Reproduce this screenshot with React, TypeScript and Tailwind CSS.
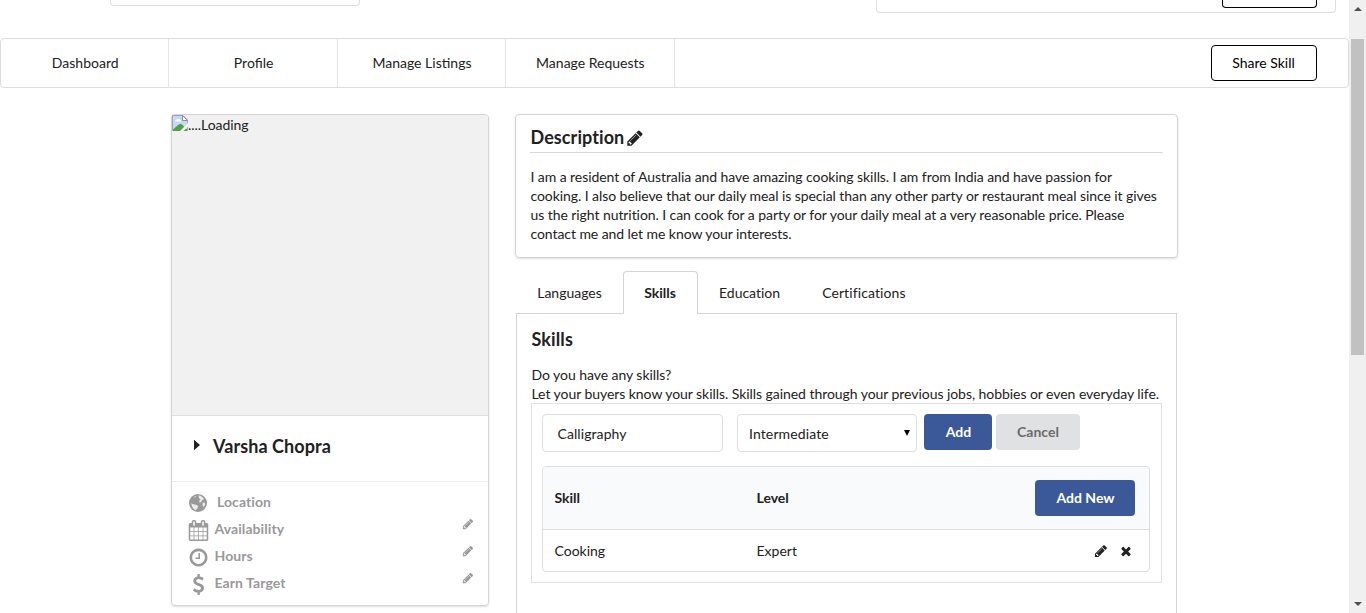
import React from "react";

const PENCIL =
  "M491 1536l91-91-235-235-91 91v107h128v128h107zm523-928q0-22-22-22-10 0-17 7l-542 542q-7 7-7 17 0 22 22 22 10 0 17-7l542-542q7-7 7-17zm-54-192l416 416-832 832h-416v-416zm683 96q0 53-37 90l-166 166-416-416 166-165q36-38 90-38 53 0 91 38l235 234q37 39 37 91z";
const TIMES =
  "M1490 1322q0 40-28 68l-136 136q-28 28-68 28t-68-28l-294-294-294 294q-28 28-68 28t-68-28l-136-136q-28-28-28-68t28-68l294-294-294-294q-28-28-28-68t28-68l136-136q28-28 68-28t68 28l294 294 294-294q28-28 68-28t68 28l136 136q28 28 28 68t-28 68l-294 294 294 294q28 28 28 68z";
const CLOCK =
  "M1024 544v448q0 14-9 23t-23 9h-320q-14 0-23-9t-9-23v-64q0-14 9-23t23-9h224v-352q0-14 9-23t23-9h64q14 0 23 9t9 23zm416 352q0-148-73-273t-198-198-273-73-273 73-198 198-73 273 73 273 198 198 273 73 273-73 198-198 73-273zm224 0q0 209-103 385.5t-279.5 279.5-385.5 103-385.5-103-279.5-279.5-103-385.5 103-385.5 279.5-279.5 385.5-103 385.5 103 279.5 279.5 103 385.5z";
const CALENDAR =
  "M192 1664h288v-288h-288v288zm352 0h320v-288h-320v288zm-352-352h288v-320h-288v320zm352 0h320v-320h-320v320zm-352-384h288v-288h-288v288zm736 736h320v-288h-320v288zm-384-736h320v-288h-320v288zm768 736h288v-288h-288v288zm-384-352h320v-320h-320v320zm-352-864v-288q0-13-9.5-22.5t-22.5-9.5h-64q-13 0-22.5 9.5t-9.5 22.5v288q0 13 9.5 22.5t22.5 9.5h64q13 0 22.5-9.5t9.5-22.5zm736 864h288v-320h-288v320zm-384-384h320v-288h-320v288zm384 0h288v-288h-288v288zm32-480v-288q0-13-9.5-22.5t-22.5-9.5h-64q-13 0-22.5 9.5t-9.5 22.5v288q0 13 9.5 22.5t22.5 9.5h64q13 0 22.5-9.5t9.5-22.5zm384-64v1280q0 52-38 90t-90 38h-1408q-52 0-90-38t-38-90v-1280q0-52 38-90t90-38h128v-96q0-66 47-113t113-47h64q66 0 113 47t47 113v96h384v-96q0-66 47-113t113-47h64q66 0 113 47t47 113v96h128q52 0 90 38t38 90z";
const DOLLAR =
  "M1362 1185q0 153-99.5 263.5t-258.5 136.5v175q0 14-9 23t-23 9h-135q-13 0-22.5-9.5t-9.5-22.5v-175q-66-9-127.5-31t-101.5-44.5-74-48-46.5-37.5-17.5-18q-17-21-2-41l103-135q7-10 23-12 15-2 24 9l2 2q113 99 243 125 37 8 74 8 81 0 142.5-43t61.5-122q0-28-15-53t-33.5-42-58.5-37.5-66-32-80-32.5q-39-16-61.5-25t-61.5-26.5-62.5-31-56.5-35.5-53.5-42.5-43.5-49-35.5-58-21-66.5-8.5-78q0-138 98-242t255-134v-180q0-13 9.5-22.5t22.5-9.5h135q14 0 23 9t9 23v176q57 6 110.5 23t87 33.5 63.5 37.5 39 29 15 14q17 18 5 38l-81 146q-8 15-23 16-14 3-27-7-3-3-14.5-12t-39-26.5-58.5-32-74.5-26-85.5-11.5q-95 0-155 43t-60 111q0 26 8.5 48t29.5 41.5 39.5 33 56 31 60.5 27 70 27.5q53 20 81 31.5t76 35 75.5 42.5 62 50 53 63.5 31.5 76.5 13 94z";

function Glyph({ d, className }: { d: string; className: string }) {
  return (
    <svg viewBox="0 0 1792 1792" fill="currentColor" className={className}>
      <path d={d} />
    </svg>
  );
}

function Globe() {
  return (
    <svg viewBox="0 0 20 20" className="mr-px size-5 shrink-0">
      <circle cx="10" cy="10" r="9" fill="currentColor" />
      <path
        d="M10.200 2.600 12.500 2.800 14.800 4.400 16.200 6.200 15 6.600 13.800 7.600 13 9.200 11.400 9.400 11.200 7.800 12.600 6.400 11.400 5.800 11 4.400Z M14.600 9.800 16.200 9.400 17.200 10.400 16.600 13 15.200 14 14.600 12.200Z M3.200 10.200 5.400 11.200 8 11.800 10.200 13 9.600 15 8.400 16.200 8 17.200 6 16.200 4.200 14Z M6.200 3.800 8 3 7.600 4.200 6.400 4.600Z"
        fill="#fff"
        fillOpacity=".8"
      />
    </svg>
  );
}

function BrokenImage() {
  return (
    <svg viewBox="0 0 16 16" className="size-4 shrink-0">
      <path d="M.5.5H11L15.500 5V15.500H.5Z" fill="#c3d9f7" stroke="#a2a2ae" />
      <path d="M3 6.500q0-2 2-2 1-1.500 2.500 0 2 0 1.500 2Z" fill="#fff" />
      <path d="M1 16V14.500L6 10Q9 8 11 10.500L15 14.500V16Z" fill="#51a044" />
      <path d="M10.500.5V5.500H15.500Z" fill="#fff" stroke="#8d8d9c" />
      <path d="M8 16 16 8V11.500L11.500 16Z" fill="#f8f8f8" />
    </svg>
  );
}

function Detail({ icon, label, editable, inset }: { icon: React.ReactNode; label: string; editable?: boolean; inset?: boolean }) {
  return (
    <div className="flex h-[27px] items-start tracking-[0.080px] text-[#999]">
      <span className="mt-[1px] flex w-[21px] justify-center">{icon}</span>
      <span className={inset ? "ml-[8px] font-bold" : "ml-[5.500px] font-bold"}>{label}</span>
      {editable && <Glyph d={PENCIL} className="ml-auto mt-[-1px] size-[12px]" />}
    </div>
  );
}

const primary = "flex h-9 items-center justify-center rounded-[4px] bg-[#3b5998] pb-px font-bold text-white";
const tab = "flex h-[42px] items-center px-[21px]";

export default function App() {
  return (
    <div className="flex h-[613px] w-full overflow-hidden bg-white font-['Lato',sans-serif] text-[14px] leading-[19px] text-[#212121] [font-variant-ligatures:none]">
      <div className="flex w-[1349px] shrink-0 flex-col">
        <div className="flex h-[38px] shrink-0 items-start justify-between pl-[110px] pr-[13px]">
          <div className="h-[6px] w-[250px] rounded-b-[4px] border border-t-0 border-[#dedede]" />
          <div className="flex h-[13px] w-[460px] items-start justify-end rounded-b-[4px] border border-t-0 border-[#dedede] pr-[18px]">
            <div className="h-[8px] w-[95px] rounded-b-[4px] border border-t-0 border-black" />
          </div>
        </div>
        <nav className="flex h-[50px] shrink-0 items-center rounded-[4px] border border-[#dcdddd]">
          {["Dashboard", "Profile", "Manage Listings", "Manage Requests"].map((item) => (
            <a key={item} className="flex h-full w-[168.400px] items-center justify-center border-r border-[#e4e4e5] pb-[2px] pl-px [font-variant-ligatures:normal]">
              {item}
            </a>
          ))}
          <button className="ml-auto mr-[31px] h-9 w-[106px] rounded-[4px] border border-black pb-[2px] pr-px text-black">Share Skill</button>
        </nav>
        <div className="flex items-start gap-[26px] pl-[171px] pt-[26px]">
          <aside className="flex h-[492px] w-[318px] flex-col rounded-[4px] border border-[#d4d4d5] shadow-[0_1px_2px_rgba(34,36,38,0.15)]">
            <div className="flex h-[301px] shrink-0 items-start rounded-t-[3px] border-b border-[#dfdfdf] bg-[#f1f1f1]">
              <BrokenImage />
              <span className="tracking-[-0.050px]">....Loading</span>
            </div>
            <div className="flex h-[66px] shrink-0 items-start border-b border-[#ededed] pl-[22px] pt-[19px]">
              <svg viewBox="0 0 6 12" className="mt-[4px] h-3 w-[6px] text-[#212121]">
                <path d="M0 .8 6 6 0 11.200Z" fill="currentColor" />
              </svg>
              <h2 className="ml-[13px] text-[18px] font-bold leading-[23px] tracking-[0.080px]">Varsha Chopra</h2>
            </div>
            <div className="flex flex-col pl-[16px] pr-[14px] pt-[10px]">
              <Detail icon={<Globe />} label="Location" inset />
              <Detail icon={<Glyph d={CALENDAR} className="size-[21px] shrink-0" />} label="Availability" editable />
              <Detail icon={<Glyph d={CLOCK} className="size-[21px] shrink-0" />} label="Hours" editable />
              <Detail icon={<Glyph d={DOLLAR} className="size-[21px] shrink-0" />} label="Earn Target" editable />
            </div>
          </aside>
          <main className="flex w-[663px] flex-col">
            <section className="h-[144px] rounded-[4px] border border-[#d4d4d5] px-[14px] pt-[11px] shadow-[0_1px_2px_rgba(34,36,38,0.15)]">
              <div className="flex h-[27px] items-start border-b border-[#d8d8d9]">
                <h3 className="pl-[0.500px] text-[18px] font-bold leading-[23px] tracking-[0.080px]">Description</h3>
                <Glyph d={PENCIL} className="ml-[2px] mt-[3px] size-[18px]" />
              </div>
              <p className="mt-[14px] whitespace-nowrap pl-[0.500px] tracking-[-0.070px]">
                I am a resident of Australia and have amazing cooking skills. I am from India and have passion for
                <br />
                cooking. I also believe that our daily meal is special than any other party or restaurant meal since it gives
                <br />
                us the right nutrition. I can cook for a party or for your daily meal at a very reasonable price. Please
                <br />
                contact me and let me know your interests.
              </p>
            </section>
            <div className="ml-px mt-[13px] flex h-[43px] w-[661px]">
              <div className="flex w-[107px] items-center justify-center border-b border-[#d4d4d5]">Languages</div>
              <div className="flex w-[75px] items-center justify-center rounded-t-[4px] border border-b-0 border-[#d4d4d5] pb-[2px] pr-px font-bold">Skills</div>
              <div className="flex flex-1 border-b border-[#d4d4d5]">
                <span className={tab}>Education</span>
                <span className={`${tab} tracking-[0.100px]`}>Certifications</span>
              </div>
            </div>
            <section className="ml-px h-[320px] w-[661px] border-x border-[#d4d4d5] px-[14px] pt-[14px]">
              <h3 className="pl-[0.500px] text-[18px] font-bold leading-[23px] tracking-[0.100px]">Skills</h3>
              <p className="mt-[14px] whitespace-nowrap pl-[0.500px] tracking-[-0.055px]">
                Do you have any skills?
                <br />
                Let your buyers know your skills. Skills gained through your previous jobs, hobbies or even everyday life.
              </p>
              <div className="h-[180px] border border-[#e0e0e1] px-[10px] pt-[10px]">
                <div className="flex items-start">
                  <div className="flex h-[38px] w-[181px] items-center rounded-[4px] border border-[#dedede] px-[14.500px] tracking-[0.080px]">Calligraphy</div>
                  <div className="ml-[14px] flex h-[38px] w-[180px] items-center justify-between rounded-[4px] border border-[#dedede] pl-[11px] pr-[6px] tracking-[0.120px]">
                    Intermediate
                    <svg viewBox="0 0 6 6" className="mb-[1px] size-[6px]">
                      <path d="M0 0H6L3 6Z" fill="#000" />
                    </svg>
                  </div>
                  <button className={`${primary} ml-[7px] w-[68px] pl-px`}>Add</button>
                  <button className="ml-[4px] flex h-9 w-[84px] items-center justify-center rounded-[4px] bg-[#e0e1e2] pb-px font-bold text-[#6a6b6b]">Cancel</button>
                </div>
                <div className="mt-[14px] h-[106px] w-[608px] rounded-[4px] border border-[#dedede]">
                  <div className="flex h-[63px] items-center rounded-t-[3px] border-b border-[#dedede] bg-[#f9fafb] pl-[11.500px] pr-[14px] font-bold">
                    <span className="w-[202px] pb-[2px]">Skill</span>
                    <span className="pb-[2px]">Level</span>
                    <button className={`${primary} ml-auto w-[100px] pl-px`}>Add New</button>
                  </div>
                  <div className="flex h-[41px] items-center pl-[11.500px] pr-[16px]">
                    <span className="w-[202px]">Cooking</span>
                    <span>Expert</span>
                    <Glyph d={PENCIL} className="ml-auto size-[14px]" />
                    <Glyph d={TIMES} className="ml-[11px] size-[14px]" />
                  </div>
                </div>
              </div>
            </section>
          </main>
        </div>
      </div>
      <div className="flex w-[17px] shrink-0 flex-col items-center bg-[#f0f0f0]">
        <svg viewBox="0 0 8 4" className="mt-[7px] h-1 w-2 shrink-0">
          <path d="M0 4 4 0 8 4Z" fill="#505050" />
        </svg>
        <div className="mt-[28px] h-[316px] w-[13px] shrink-0 bg-[#c1c1c1]" />
        <svg viewBox="0 0 8 4" className="mb-[7px] mt-auto h-1 w-2 shrink-0">
          <path d="M0 0H8L4 4Z" fill="#505050" />
        </svg>
      </div>
    </div>
  );
}
